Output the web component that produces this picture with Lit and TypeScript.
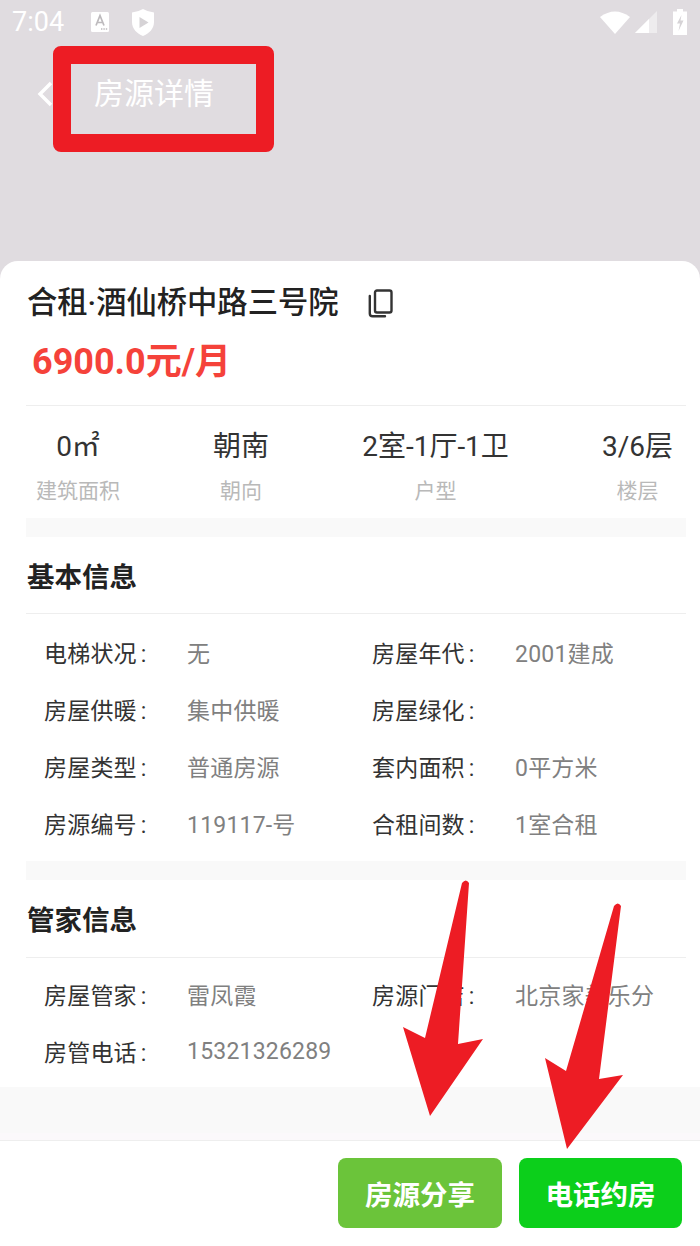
import { LitElement, html, css, svg } from "lit";
import { customElement } from "lit/decorators.js";

@customElement("app-root")
export class AppRoot extends LitElement {
  static styles = css`
    :host {
      display: block;
      position: relative;
      width: 700px;
      height: 1246px;
      overflow: hidden;
      background: #fff;
      font-family: "Roboto", "Noto Sans CJK SC", sans-serif;
      color: #222;
    }
    .top { height: 281px; background: #e0dce0; display: flex; flex-direction: column; }
    .status { height: 46px; display: flex; align-items: center; padding: 0 13px 2px 12px; box-sizing: border-box; color: #fff; }
    .time { font-size: 27px; width: 79px; line-height: 44px; color: #fff; }
    .status svg { display: block; flex: none; }
    .gap1 { width: 23px; }
    .grow { flex: 1; }
    .sig { margin-left: 5px; }
    .bat { margin-left: 16px; }
    .nav { display: flex; align-items: center; height: 96px; padding-left: 37px; }
    .nav-title { margin-left: 41px; font-size: 30px; color: #fff; line-height: 96px; }
    .sheet { background: #fff; margin-top: -20px; border-radius: 18px 18px 0 0; position: relative; height: 826px; padding: 0 14px 0 26px; box-sizing: border-box; }
    .title-row { display: flex; align-items: center; padding-top: 22px; height: 40px; padding-left: 1px; }
    .title { font-size: 30.3px; font-weight: 500; color: #222; line-height: 40px; white-space: nowrap; }
    .copy { margin-left: 29px; display: block; flex: none; }
    .price { font-size: 36px; font-weight: 700; color: #f5423a; padding-left: 6px; line-height: 44px; margin-top: 17px; }
    .rule { height: 1px; background: #eeeeee; }
    .r1 { margin-top: 21px; }
    .stats { display: flex; justify-content: space-between; padding: 0 13px 0 10px; height: 112px; }
    .stat { display: flex; flex-direction: column; align-items: center; }
    .sv { font-size: 28px; line-height: 32px; margin-top: 25px; color: #333; white-space: nowrap; }
    .sl { font-size: 21px; line-height: 30px; margin-top: 13px; color: #b9b9b9; white-space: nowrap; }
    .band { height: 19px; background: #f9f9f9; }
    .band2 { margin-top: 10px; }
    .h { font-size: 27.5px; font-weight: 700; color: #222; height: 76px; line-height: 81px; padding-left: 1px; }
    .h2 { height: 77px; line-height: 81px; }
    .grid { display: grid; grid-template-columns: 328px 1fr; }
    .g1 { padding-top: 10px; }
    .g2 { padding-top: 8px; }
    .cell { display: flex; height: 56.75px; align-items: center; font-size: 23px; white-space: nowrap; }
    .k { width: 143px; color: #333; padding-left: 18px; flex: none; letter-spacing: 0.2px; }
    .colon { margin-left: 4px; }
    .v { color: #808080; letter-spacing: 0.2px; }
    .bottom-band { height: 46px; background: #f9f9f9; }
    .bottom-fade { height: 7px; background: #fbf9fb; }
    .footer { height: 106px; border-top: 1px solid #eee; box-sizing: border-box; background: #fff; display: flex; justify-content: flex-end; gap: 17px; padding: 17px 18px 0 0; }
    .btn { height: 70px; border-radius: 8px; color: #fff; font-size: 27.5px; font-weight: 700; display: flex; align-items: center; justify-content: center; }
    .b1 { background: #6bc43a; width: 164px; }
    .b2 { background: #0ccf1b; width: 163px; }
    .redbox { position: absolute; left: 53px; top: 46px; width: 221px; height: 106px; box-sizing: border-box; border: 18px solid #ed1c24; border-radius: 8px; }
    .arrows { position: absolute; left: 0; top: 0; pointer-events: none; }
  `;

  private cell(k: string, v: string) {
    return html`<div class="cell"><span class="k">${k}<span class="colon">:</span></span><span class="v">${v}</span></div>`;
  }

  private stat(v: string, l: string) {
    return html`<div class="stat"><div class="sv">${v}</div><div class="sl">${l}</div></div>`;
  }

  render() {
    return html`
      <div class="top">
        <div class="status">
          <span class="time">7:04</span>
          <svg width="18" height="20" viewBox="0 0 18 20"><rect width="18" height="20" rx="1.5" fill="#fff"/><path d="M5 13.5 L9 3.5 L13 13.5 M6.5 10.5 H11.5" stroke="#bdbabd" stroke-width="1.7" fill="none"/><path d="M10 17 h1.4 M12.4 17 h1.4 M14.8 17 h1.4" stroke="#bdbabd" stroke-width="1.4"/></svg>
          <span class="gap1"></span>
          <svg width="22" height="27" viewBox="0 0 22 27"><path d="M11 0 Q16 3 22 3.5 V13 C22 20 17 24.5 11 27 C5 24.5 0 20 0 13 V3.5 Q6 3 11 0 Z" fill="#fff"/><path d="M7.5 8 L16.5 13.5 L7.5 19 Z" fill="#d6d3d6"/></svg>
          <span class="grow"></span>
          <svg width="30" height="23" viewBox="0 0 30 23"><path d="M0 6 Q15 -5 30 6 L15 23 Z" fill="#fff"/></svg>
          <svg class="sig" width="22" height="22" viewBox="0 0 22 22"><path d="M22 0 V22 H0 Z" fill="#eeecee"/><path d="M14 8 V22 H0 Z" fill="#fff"/></svg>
          <svg class="bat" width="14" height="26" viewBox="0 0 14 26"><path d="M4 0 H10 V2.5 H14 V26 H0 V2.5 H4 Z" fill="#fff"/><path d="M8.5 6 L4 14.5 H7 L5.5 22 L10.5 11.5 H7.5 Z" fill="#d6d3d6"/></svg>
        </div>
        <div class="nav">
          <svg width="16" height="26" viewBox="0 0 16 26"><path d="M14 2 L3 13 L14 24" stroke="#fff" stroke-width="3.4" fill="none"/></svg>
          <span class="nav-title">房源详情</span>
        </div>
      </div>
      <div class="sheet">
        <div class="title-row">
          <span class="title">合租·酒仙桥中路三号院</span>
          <svg class="copy" width="25" height="29" viewBox="0 0 25 29" fill="none" stroke="#333" stroke-width="2.4"><rect x="7" y="1.5" width="16.5" height="22" rx="2"/><path d="M1.8 7 V24.5 Q1.8 27.3 4.6 27.3 H17" stroke-linecap="round"/></svg>
        </div>
        <div class="price">6900.0元/月</div>
        <div class="rule r1"></div>
        <div class="stats">
          ${this.stat("0㎡", "建筑面积")}
          ${this.stat("朝南", "朝向")}
          ${this.stat("2室-1厅-1卫", "户型")}
          ${this.stat("3/6层", "楼层")}
        </div>
        <div class="band"></div>
        <div class="h">基本信息</div>
        <div class="rule"></div>
        <div class="grid g1">
          ${this.cell("电梯状况", "无")}
          ${this.cell("房屋年代", "2001建成")}
          ${this.cell("房屋供暖", "集中供暖")}
          ${this.cell("房屋绿化", "")}
          ${this.cell("房屋类型", "普通房源")}
          ${this.cell("套内面积", "0平方米")}
          ${this.cell("房源编号", "119117-号")}
          ${this.cell("合租间数", "1室合租")}
        </div>
        <div class="band band2"></div>
        <div class="h h2">管家信息</div>
        <div class="rule"></div>
        <div class="grid g2">
          ${this.cell("房屋管家", "雷凤霞")}
          ${this.cell("房源门店", "北京家美乐分")}
          ${this.cell("房管电话", "15321326289")}
        </div>
      </div>
      <div class="bottom-band"></div>
      <div class="bottom-fade"></div>
      <div class="footer">
        <div class="btn b1">房源分享</div>
        <div class="btn b2">电话约房</div>
      </div>
      <div class="redbox"></div>
      <svg class="arrows" width="700" height="1246" viewBox="0 0 700 1246">
        ${svg`<path d="M462 883 Q466 878 469 883 L458 1044 L483 1039 L430 1116 L403 1027 L425 1038 Z" fill="#ed1c24"/>`}
        ${svg`<path d="M614 906 Q618 901 621 906 L599 1079 L623 1075 L567 1149 L545 1058 L566 1071 Z" fill="#ed1c24"/>`}
      </svg>
    `;
  }
}
